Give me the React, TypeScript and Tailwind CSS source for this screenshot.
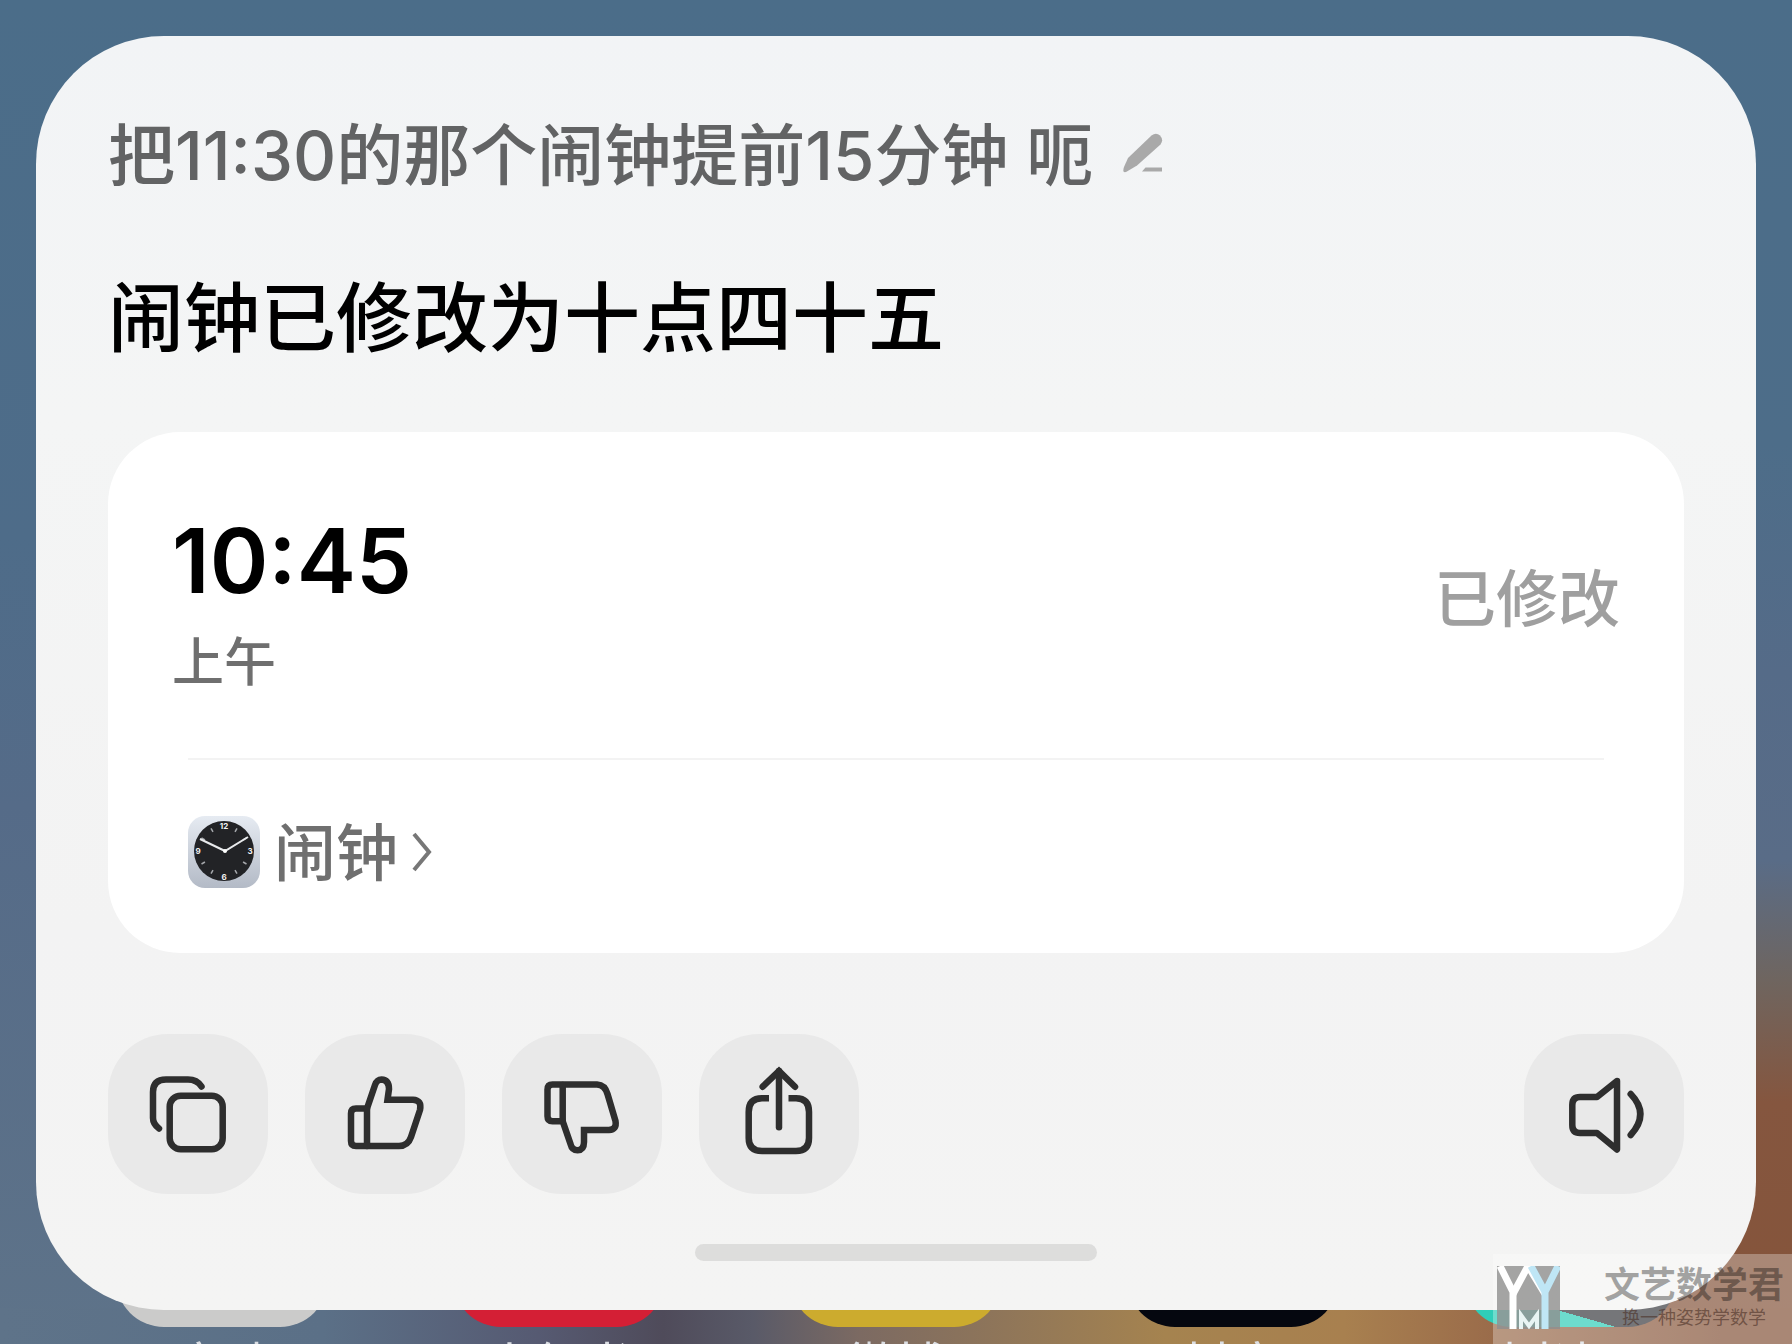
import { useState } from "react";
import type { ReactNode } from "react";

const homeApps = [
  { name: "百度贴吧", tile: "bg-[#cbcbca]" },
  { name: "小红书", tile: "bg-[#d41f35]" },
  { name: "微博", tile: "bg-[#ccab2e]" },
  { name: "抖音", tile: "bg-[#05070f]" },
  { name: "时光相册", tile: "bg-[linear-gradient(16deg,#2fcdb8_16%,#3a3b3f_16%)]" },
];

function HomeScreen() {
  return (
    <div
      aria-hidden="true"
      className="absolute inset-0 flex flex-col justify-end overflow-hidden bg-[linear-gradient(180deg,#4b6d89_0%,#4e6c89_40%,#556b88_60%,#5e7389_100%)]"
    >
      <div className="absolute inset-y-0 right-0 w-44 bg-[linear-gradient(180deg,#4b6d89_0%,#4d6d89_33%,#556b88_50%,#596c87_64%,#6f655f_73%,#85563f_82%,#85543a_100%)]" />
      <div className="absolute inset-x-0 bottom-0 h-9 bg-[linear-gradient(90deg,#5e7389_0%,#5b7087_18%,#565a72_30%,#4f4b5a_37%,#595a68_42%,#7c6a62_48%,#a5834f_65%,#a8804f_75%,#996a4a_84%,#85543a_96%)]" />
      <div className="relative grid grid-cols-5 px-[54px]">
        {homeApps.map((app) => (
          <div key={app.name} className="flex flex-col items-center">
            <div className={`size-[212px] rounded-[48px] ${app.tile}`} />
            <span className="h-[17px] overflow-hidden pt-3.5 text-[50px] leading-[50px] text-[#dcdfe4]">
              {app.name}
            </span>
          </div>
        ))}
      </div>
    </div>
  );
}

function PencilIcon() {
  return (
    <svg viewBox="0 0 40 40" className="size-10" fill="#a9a9a9">
      <path d="M0.5 38.5 Q0 37 1 34 L5 25 L28.5 2.5 Q33 -1 37 2.5 Q41 7 37.5 11.5 L14 32.5 L3.5 38.8 Q1.5 39.8 0.5 38.5 Z" />
      <path d="M19 38.5 L22.5 34.5 H39 V38.5 Z" />
    </svg>
  );
}

function ClockIcon() {
  const ticks = [30, 60, 120, 150, 210, 240, 300, 330];
  return (
    <svg viewBox="0 0 72 72" className="size-[72px]">
      <defs>
        <linearGradient id="clockCase" x1="0" y1="0" x2="0" y2="1">
          <stop offset="0" stopColor="#e6ebf2" />
          <stop offset="1" stopColor="#b3bac6" />
        </linearGradient>
      </defs>
      <rect width="72" height="72" rx="17" fill="url(#clockCase)" />
      <circle cx="36" cy="35" r="30" fill="#222326" />
      {ticks.map((angle) => (
        <line
          key={angle}
          x1="36"
          y1="9"
          x2="36"
          y2="13"
          stroke="#a5a7ab"
          strokeWidth="1.5"
          transform={`rotate(${angle} 36 35)`}
        />
      ))}
      <g fill="#f2f2f2" fontSize="8" fontWeight="700" fontFamily="Inter, sans-serif" textAnchor="middle">
        <text x="36" y="13">12</text>
        <text x="62" y="38">3</text>
        <text x="36" y="64">6</text>
        <text x="10" y="38">9</text>
      </g>
      <path d="M12 23 L37 35 L60 21" fill="none" stroke="#e8eaec" strokeWidth="2" />
      <circle cx="37" cy="35" r="2" fill="#ffffff" />
    </svg>
  );
}

type ActionButtonProps = {
  label: string;
  children: ReactNode;
  pressed?: boolean;
  onClick?: () => void;
};

function ActionButton({ label, children, pressed, onClick }: ActionButtonProps) {
  return (
    <button
      type="button"
      aria-label={label}
      aria-pressed={pressed}
      onClick={onClick}
      className="size-40 shrink-0 rounded-[60px] bg-[#e9e9e9]"
    >
      <svg
        viewBox="0 0 160 160"
        className="size-full"
        fill="none"
        stroke="#2e2e2e"
        strokeWidth="6.5"
        strokeLinecap="round"
      >
        {children}
      </svg>
    </button>
  );
}

function Watermark() {
  return (
    <div className="absolute right-0 bottom-0 flex h-[90px] w-[299px] items-start bg-white/30 pt-3 pl-1">
      <svg viewBox="0 0 63 63" className="size-[63px] shrink-0">
        <rect width="63" height="63" fill="#8f8f8f" fillOpacity="0.8" />
        <g fill="none" strokeWidth="7">
          <path d="M3 0 L16 26 V63" stroke="#ffffff" />
          <path d="M16 28 L31 0 L48 28" stroke="#ffffff" />
          <path d="M34 0 L48 26 L61 0 M48 24 V63" stroke="#bfe6f5" />
          <path d="M24 63 V49 L32 60 L40 49 V63" stroke="#e8f4f3" strokeWidth="4" />
        </g>
      </svg>
      <div className="ml-11 flex flex-col items-center">
        <span className="text-[36px] leading-[38px] font-bold text-black/35">文艺数学君</span>
        <span className="mt-1 text-[18px] leading-5 text-[#4a3026]/60">换一种姿势学数学</span>
      </div>
    </div>
  );
}

export default function App() {
  const [vote, setVote] = useState<"up" | "down" | null>(null);
  const [speaking, setSpeaking] = useState(false);

  return (
    <div className="relative min-h-screen overflow-hidden px-9 pt-9 pb-[34px] font-['Inter','Noto_Sans_CJK_SC',sans-serif]">
      <HomeScreen />

      <main className="relative flex flex-col rounded-[128px] bg-[linear-gradient(180deg,#f2f4f6_0%,#f4f5f5_30%,#f3f3f3_70%,#f4f4f3_100%)] px-[72px] pt-[72px] pb-[49px]">
        <div className="flex items-center gap-[30px] text-[67px] leading-[96px] font-medium text-[#626364]">
          <p>把11:30的那个闹钟提前15分钟 呃</p>
          <button type="button" aria-label="编辑" className="pb-1.5">
            <PencilIcon />
          </button>
        </div>

        <h1 className="mt-16 text-[76px] leading-[100px] font-medium text-black">
          闹钟已修改为十点四十五
        </h1>

        {/* 闹钟卡片 */}
        <section className="mt-16 rounded-[72px] bg-white px-16">
          <div className="flex items-center justify-between pt-[81px] pb-[55px]">
            <div>
              <time className="block text-[89px] leading-[96px] font-semibold text-black">10:45</time>
              <p className="mt-3.5 text-[52px] leading-[80px] font-medium text-[#6f6f6f]">上午</p>
            </div>
            <span className="pb-4 text-[62px] leading-[80px] font-medium text-[#9f9f9f]">已修改</span>
          </div>
          <hr className="mx-4 border-t-2 border-[#f3f3f3]" />
          <a href="#alarm" className="flex w-fit items-center gap-3.5 px-4 pt-11 pb-[53px]">
            <ClockIcon />
            <span className="pt-1 text-[62px] leading-[92px] font-medium text-[#6f6f6f]">闹钟</span>
            <svg viewBox="0 0 20 40" className="h-10 w-5" fill="none" stroke="#777777" strokeWidth="4">
              <path d="M2 2 L17 20 L2 38" />
            </svg>
          </a>
        </section>

        {/* 操作按钮 */}
        <div className="mt-[81px] flex items-center gap-[37px]">
          <ActionButton label="复制">
            <rect x="61.7" y="61.7" width="53" height="53.5" rx="11" />
            <path d="M93.5 52.5 Q89 45.5 80 45.5 H58 Q45 45.5 45 58 V84 Q45 90 51 94.5" />
          </ActionButton>
          <ActionButton label="赞" pressed={vote === "up"} onClick={() => setVote("up")}>
            <path d="M62 74.5 L70 51 Q72 45.5 76.5 45.5 Q84 46 84 55 L82.5 65.7 H108 Q117 66 115 76 L106 103 Q103 112 94 112 H51 Q46 112 46 107 V79.5 Q46 74.5 51 74.5 Z" />
            <path d="M62 75 V112" />
          </ActionButton>
          <ActionButton label="踩" pressed={vote === "down"} onClick={() => setVote("down")}>
            <path d="M60.7 87.3 L68.5 110 Q70 116.3 75.5 116.3 Q82 116 82 108 V96 H107 Q115 95.5 113.5 87 L105.5 60 Q103 51 95 50.5 H50.5 Q45.5 50.5 45.5 55.5 V82.3 Q45.5 87.3 50.5 87.3 Z" />
            <path d="M60.7 51 V87" />
          </ActionButton>
          <ActionButton label="分享">
            <path d="M80 37 V93.3" />
            <path d="M63.7 52.7 L80 37 L96 52.7" />
            <path
              strokeLinecap="butt"
              d="M70 64.3 H63 Q49.7 64.3 49.7 78 V104 Q49.7 117 63 117 H97 Q110 117 110 104 V78 Q110 64.3 97 64.3 H89.5"
            />
          </ActionButton>
          <div className="grow" />
          <ActionButton label="朗读" pressed={speaking} onClick={() => setSpeaking(!speaking)}>
            <path
              strokeLinejoin="round"
              d="M93 47 L73 63 H56 Q48.3 63 48.3 71 V91 Q48.3 99 56 99 H73 L93 115.5 Z"
            />
            <path d="M106.7 60 Q126 80 106.7 101" />
          </ActionButton>
        </div>

        <div className="mt-[50px] h-[17px] w-[402px] self-center rounded-full bg-[#dddddc]" />
      </main>

      <Watermark />
    </div>
  );
}
